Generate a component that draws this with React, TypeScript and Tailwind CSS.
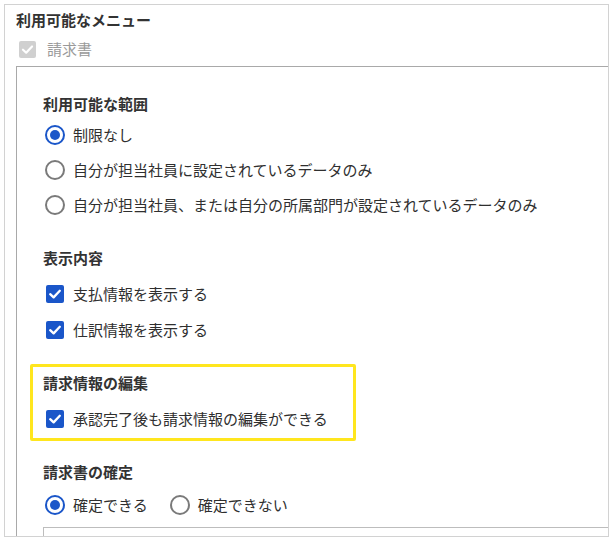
import React from "react";

const FONT = { fontFamily: '"Noto Sans CJK JP", "Noto Sans", sans-serif' };

const Check = ({ color = "#fff" }: { color?: string }) => (
  <svg viewBox="0 0 18 18" className="w-full h-full">
    <polyline
      points="4.2,9.2 7.6,12.4 13.8,5.8"
      fill="none"
      stroke={color}
      strokeWidth="2.3"
      strokeLinecap="round"
      strokeLinejoin="round"
    />
  </svg>
);

const Checkbox = ({ label }: { label: string }) => (
  <label className="flex items-center h-[36px] pl-[3px]">
    <span className="w-[18px] h-[18px] rounded-[2px] bg-[#1a56c9] shrink-0">
      <Check />
    </span>
    <span className="ml-[9px] text-[15px] leading-[22px] text-[#2f2f2f]">{label}</span>
  </label>
);

const Radio = ({ label, checked }: { label: string; checked?: boolean }) => (
  <label className="flex items-center h-[35px] pl-[2px]">
    <span
      className={`w-[20px] h-[20px] rounded-full border-2 flex items-center justify-center shrink-0 ${
        checked ? "border-[#1a56c9]" : "border-[#7a7a7a]"
      }`}
    >
      {checked && <span className="w-[10px] h-[10px] rounded-full bg-[#1a56c9]" />}
    </span>
    <span className="ml-[8px] text-[15px] leading-[22px] text-[#2f2f2f]">{label}</span>
  </label>
);

const Heading = ({ children, className = "" }: { children: React.ReactNode; className?: string }) => (
  <h3 className={`text-[15px] leading-[22px] font-bold text-[#333] ${className}`}>{children}</h3>
);

export default function App() {
  return (
    <div className="w-[615px] h-[542px] bg-white pt-[4px] pl-[4px]" style={FONT}>
      <div className="w-[605px] h-[533px] border border-[#d2d2d2] bg-white overflow-hidden pl-[11px] pt-[4px]">
        {/* 利用可能なメニュー */}
        <Heading>利用可能なメニュー</Heading>

        <div className="flex items-center h-[24px] mt-[6px] pl-[3px]">
          <span className="w-[17px] h-[17px] rounded-[2px] bg-[#d0d0d0]">
            <Check />
          </span>
          <span className="ml-[11px] text-[15px] leading-[22px] text-[#9a9a9a]">請求書</span>
        </div>

        {/* settings panel */}
        <div className="mt-[5px] border-l border-t border-[#a9a9a9] pl-[26px] pt-[26px] h-[500px]">
          <Heading>利用可能な範囲</Heading>
          <div className="mt-[2px]">
            <Radio label="制限なし" checked />
            <Radio label="自分が担当社員に設定されているデータのみ" />
            <Radio label="自分が担当社員、または自分の所属部門が設定されているデータのみ" />
          </div>

          <Heading className="mt-[25px]">表示内容</Heading>
          <div className="mt-[7px]">
            <Checkbox label="支払情報を表示する" />
            <Checkbox label="仕訳情報を表示する" />
          </div>

          {/* highlighted section */}
          <div className="mt-[16px] -ml-[13px] w-[326px] border-[3px] border-[#ffe61e] rounded-[2px] pl-[10px] pt-[5px] pb-[1px]">
            <Heading>請求情報の編集</Heading>
            <div className="mt-[7px]">
              <Checkbox label="承認完了後も請求情報の編集ができる" />
            </div>
          </div>

          <Heading className="mt-[20px]">請求書の確定</Heading>
          <div className="mt-[4px] flex gap-[20px]">
            <Radio label="確定できる" checked />
            <Radio label="確定できない" />
          </div>

          <div className="mt-[5px] h-[60px] border-l border-t border-[#bdbdbd]" />
        </div>
      </div>
    </div>
  );
}
